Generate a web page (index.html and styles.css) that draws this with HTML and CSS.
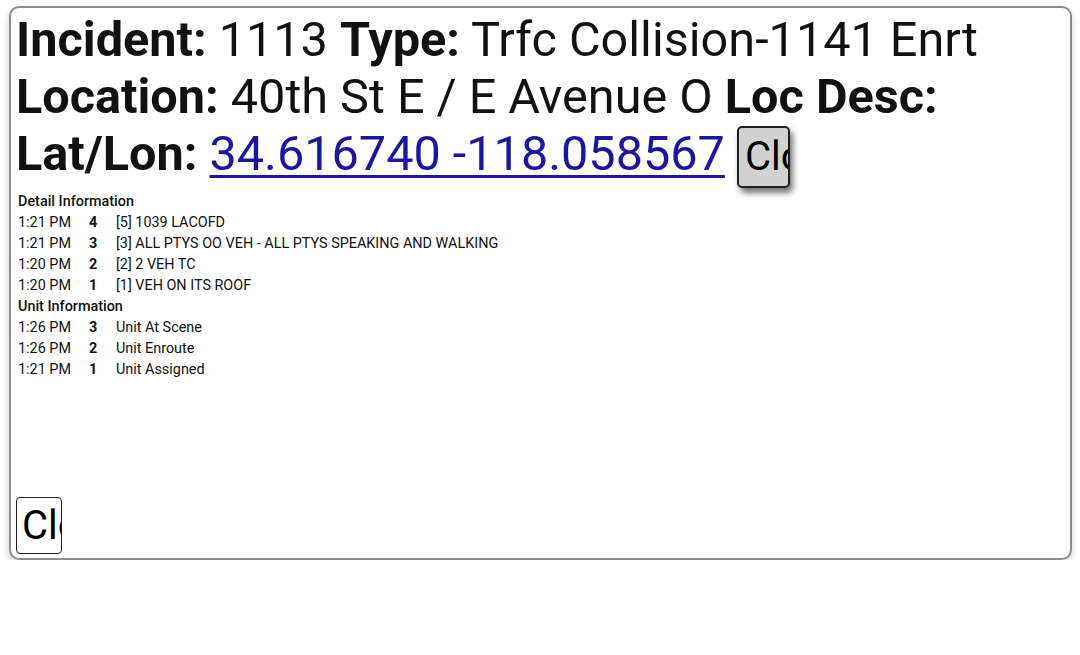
FILE: index.html
```html
<!DOCTYPE html>
<html>
<head>
<meta charset="utf-8">
<link rel="stylesheet" href="styles.css">
</head>
<body>
<div class="panel">
  <div class="head">
    <div class="line"><b>Incident:</b> 1113 <b>Type:</b> Trfc Collision-1141 Enrt</div>
    <div class="line"><b>Location:</b> 40th St E / E Avenue O <b>Loc Desc:</b></div>
    <div class="line"><b>Lat/Lon:</b> <a class="ll" href="#">34.616740 -118.058567</a> <button class="btn btn-top">Close</button></div>
  </div>
  <table class="info">
    <colgroup><col class="c-time"><col class="c-num"><col></colgroup>
    <tr><th colspan="3">Detail Information</th></tr>
    <tr><td>1:21 PM</td><td class="n">4</td><td>[5] 1039 LACOFD</td></tr>
    <tr><td>1:21 PM</td><td class="n">3</td><td>[3] ALL PTYS OO VEH - ALL PTYS SPEAKING AND WALKING</td></tr>
    <tr><td>1:20 PM</td><td class="n">2</td><td>[2] 2 VEH TC</td></tr>
    <tr><td>1:20 PM</td><td class="n">1</td><td>[1] VEH ON ITS ROOF</td></tr>
    <tr><th colspan="3">Unit Information</th></tr>
    <tr><td>1:26 PM</td><td class="n">3</td><td>Unit At Scene</td></tr>
    <tr><td>1:26 PM</td><td class="n">2</td><td>Unit Enroute</td></tr>
    <tr><td>1:21 PM</td><td class="n">1</td><td>Unit Assigned</td></tr>
  </table>
  <div class="foot"><button class="btn btn-bottom">Close</button></div>
</div>
</body>
</html>
```
FILE: styles.css
```css
html, body {
  margin: 0;
  padding: 0;
  background: #fff;
}
body {
  font-family: Roboto, "Liberation Sans", sans-serif;
  color: #111;
}
.panel {
  box-sizing: border-box;
  margin: 6px 0 0 9px;
  width: 1063px;
  height: 554px;
  border: 2px solid #8c8c8c;
  border-radius: 10px;
  box-shadow: 0 4px 8px rgba(0, 0, 0, 0.18);
  padding: 3px 5px 4px 5px;
  display: flex;
  flex-direction: column;
}
.head {
  font-size: 48.6px;
  line-height: 57px;
  white-space: nowrap;
}
.head .line {
  height: 57px;
}
.head b {
  font-weight: 700;
}
.ll {
  color: #1a16a3;
  text-decoration: underline;
  text-decoration-thickness: 3px;
  text-underline-offset: 5px;
}
.btn {
  font-family: Roboto, "Liberation Sans", sans-serif;
  font-size: 40px;
  color: #000;
  overflow: hidden;
  white-space: nowrap;
  text-align: left;
  padding: 0 6px;
  box-sizing: border-box;
}
.btn-top {
  width: 53px;
  height: 62px;
  background: #d2d2d2;
  border: 2px solid #1e1e1e;
  border-radius: 5px;
  box-shadow: 3px 5px 6px rgba(0, 0, 0, 0.55);
  vertical-align: baseline;
}
.info {
  border-collapse: collapse;
  font-size: 14.4px;
  margin-top: 9px;
  margin-left: 2px;
}
.info th {
  text-align: left;
  font-weight: 500;
  padding: 0;
  height: 21px;
}
.info td {
  padding: 0;
  height: 21px;
  white-space: nowrap;
}
.c-time { width: 71px; }
.c-num { width: 27px; }
.info td.n {
  font-weight: 700;
}
.foot {
  margin-top: auto;
}
.btn-bottom {
  width: 46px;
  height: 57px;
  background: #fff;
  border: 1px solid #222;
  border-radius: 4px;
  padding: 0 5px;
}
```
